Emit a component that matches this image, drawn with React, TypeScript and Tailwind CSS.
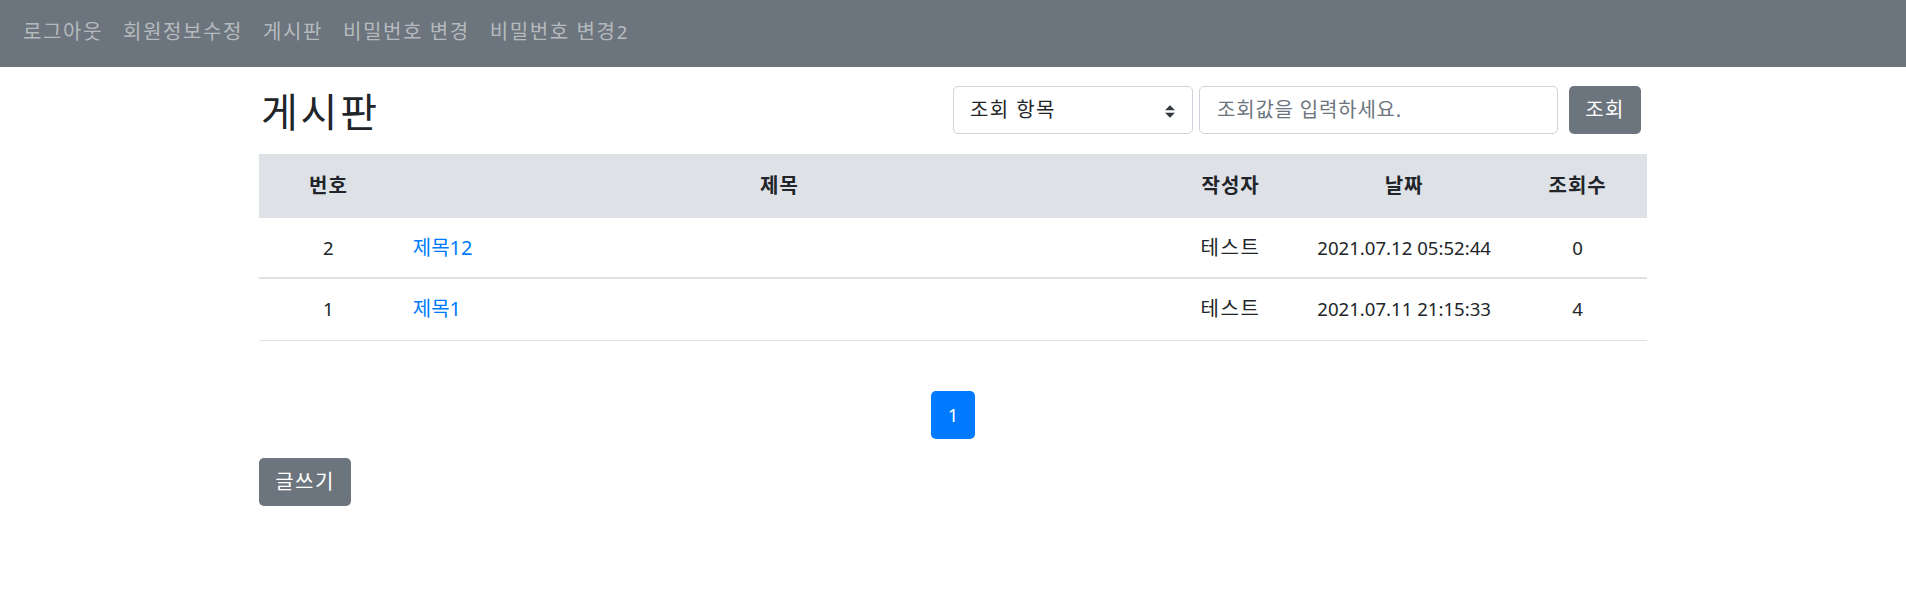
import React from "react";

const font = "font-['Noto_Sans','Noto_Sans_CJK_KR',sans-serif]";

const rows = [
  { no: 2, title: "제목12", author: "테스트", date: "2021.07.12 05:52:44", views: 0 },
  { no: 1, title: "제목1", author: "테스트", date: "2021.07.11 21:15:33", views: 4 },
];

export default function App() {
  return (
    <div className={`${font} w-[1906px] h-[596px] bg-white text-[#212529] text-[20px] leading-[30px]`}>
      <nav className="h-[67px] bg-[#6c757d] flex items-center pl-[23px] gap-[20px] text-[#b6babe] pb-[3px] tracking-[0.08em]">
        <span>로그아웃</span>
        <span>회원정보수정</span>
        <span>게시판</span>
        <span>비밀번호 변경</span>
        <span>
          비밀번호 변경<span className="tracking-normal text-[18.6px]">2</span>
        </span>
      </nav>
      <div className="w-[1388px] mx-auto">
        <div className="flex items-center justify-between pt-[19px] mb-[20px] h-[67px]">
          <h2 className="text-[40px] leading-[48px] pl-[2px] mt-[4px] tracking-[0.07em]">게시판</h2>
          <div className="flex items-center mr-[6px]">
            <div className="relative w-[240px] h-[48px] border border-[#ced4da] rounded-[5px] flex items-center pl-[16px] mr-[6px] tracking-[0.07em]">
              <span>조회 항목</span>
              <svg className="absolute right-[17px] top-[17.5px]" width="10" height="13" viewBox="0 0 4 5">
                <path d="M2 0L0 2h4zm0 5L0 3h4z" fill="#343a40" />
              </svg>
            </div>
            <div className="w-[359px] h-[48px] border border-[#ced4da] rounded-[5px] flex items-center pl-[17px] text-[#6c757d] mr-[11px] tracking-[0.04em]">
              조회값을 입력하세요.
            </div>
            <button className="w-[72px] h-[48px] rounded-[5px] bg-[#6c757d] text-white tracking-[0.07em]">조회</button>
          </div>
        </div>
        <table className="w-[1388px] table-fixed border-collapse">
          <colgroup>
            <col className="w-[10%]" />
            <col className="w-[55%]" />
            <col className="w-[10%]" />
            <col className="w-[15%]" />
            <col className="w-[10%]" />
          </colgroup>
          <thead>
            <tr className="bg-[#dee2e6] h-[64px] tracking-[0.05em]">
              <th className="font-bold text-center">번호</th>
              <th className="font-bold text-center">제목</th>
              <th className="font-bold text-center">작성자</th>
              <th className="font-bold text-center">날짜</th>
              <th className="font-bold text-center">조회수</th>
            </tr>
          </thead>
          <tbody>
            {rows.map((r, i) => (
              <tr
                key={r.no}
                className={i === 0 ? "h-[60px] border-b-2 border-[#dee2e6]" : "h-[62px] border-b border-[#dee2e6]"}
              >
                <td className="text-center text-[18.6px]">{r.no}</td>
                <td className="px-[15px] text-[#007bff]">{r.title}</td>
                <td className="text-center tracking-[0.08em]">{r.author}</td>
                <td className="text-center text-[18.6px]">{r.date}</td>
                <td className="text-center text-[18.6px]">{r.views}</td>
              </tr>
            ))}
          </tbody>
        </table>
        <div className="flex justify-center mt-[50px] mb-[19px]">
          <div className="w-[44px] h-[48px] rounded-[5px] bg-[#007bff] text-white text-[18.6px] flex items-center justify-center">1</div>
        </div>
        <button className="w-[92px] h-[48px] rounded-[5px] bg-[#6c757d] text-white tracking-[0.07em]">글쓰기</button>
      </div>
    </div>
  );
}
